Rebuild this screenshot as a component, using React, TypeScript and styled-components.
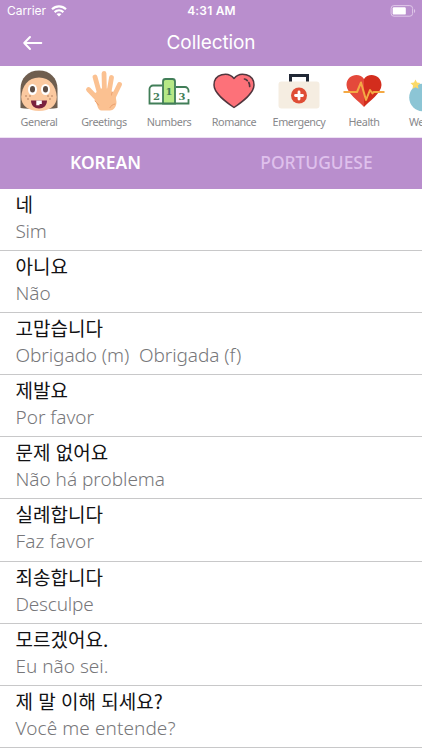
import React from 'react';
import styled, { createGlobalStyle } from 'styled-components';

const PURPLE = '#b98ecd';

const GlobalStyle = createGlobalStyle`
  * { box-sizing: border-box; }
  body { margin: 0; background: #fff; overflow: hidden; }
`;

const Screen = styled.div`
  width: 422px;
  height: 750px;
  overflow: hidden;
  background: #fff;
  display: flex;
  flex-direction: column;
  font-family: 'Noto Sans', 'Noto Sans CJK KR', sans-serif;
`;

const StatusBar = styled.div`
  flex: none;
  height: 22px;
  padding: 0 6px 0 7px;
  display: grid;
  grid-template-columns: 1fr auto 1fr;
  align-items: center;
  background: ${PURPLE};
  color: #fff;
  font-family: Inter, sans-serif;
  font-size: 12px;
  line-height: 22px;
`;

const Carrier = styled.div`
  display: flex;
  align-items: center;
  gap: 5px;
  letter-spacing: -0.05px;
`;

const Clock = styled.div`
  font-weight: 600;
  letter-spacing: 0.2px;
`;

const BatterySlot = styled.div`
  display: flex;
  justify-content: flex-end;
`;

const NavBar = styled.header`
  flex: none;
  height: 44px;
  padding: 0 21px;
  display: grid;
  grid-template-columns: 24px 1fr 24px;
  align-items: center;
  background: ${PURPLE};
`;

const BackButton = styled.button`
  display: flex;
  padding: 0;
  margin-top: -3px;
  border: 0;
  background: none;
`;

const Title = styled.h1`
  margin: 0;
  color: #fff;
  font: 400 19px/40px Inter, sans-serif;
  letter-spacing: -0.1px;
  text-align: center;
  padding-bottom: 3px;
`;

const Categories = styled.nav`
  flex: none;
  height: 72px;
  padding: 4px 0 0 6.5px;
  display: flex;
  overflow: hidden;
  border-bottom: 1px solid #efe2f4;
`;

const Category = styled.div`
  flex: none;
  width: 65px;
  display: flex;
  flex-direction: column;
  align-items: center;
  color: #88888b;
`;

const CategoryLabel = styled.span`
  margin-top: 2px;
  font-size: 10.8px;
  line-height: 16px;
  letter-spacing: -0.42px;
  white-space: nowrap;
`;

const Tabs = styled.div`
  flex: none;
  height: 51px;
  display: grid;
  grid-template-columns: 1fr 1fr;
  background: ${PURPLE};
`;

const Tab = styled.div<{ $active?: boolean }>`
  color: ${(p) => (p.$active ? '#fff' : '#dfc0ec')};
  font-size: 17.4px;
  font-weight: ${(p) => (p.$active ? 600 : 500)};
  line-height: 48px;
  text-align: center;
`;

const PhraseList = styled.ul`
  margin: 0;
  padding: 0;
  list-style: none;
`;

const PhraseRow = styled.li`
  height: 62.1px;
  padding: 1px 15.5px 0;
  border-bottom: 1px solid #c8c8c9;
`;

const Phrase = styled.div`
  color: #121214;
  font: 400 19px/27px 'Noto Sans CJK KR', sans-serif;
  word-spacing: 1px;
`;

const Translation = styled.div<{ $spacing?: number }>`
  margin-top: 1px;
  color: #77777a;
  font-size: 19px;
  font-weight: 300;
  line-height: 26px;
  letter-spacing: ${(p) => p.$spacing ?? 0}px;
  white-space: pre;
`;

const WifiIcon = () => (
  <svg width="16" height="12" viewBox="0 0 16 12" fill="none" stroke="#fff" strokeWidth="2.1">
    <path d="M1 4.3C5 .4 11 .4 15 4.3" />
    <path d="M3.6 7.1c2.6-2.3 6.2-2.3 8.8 0" />
    <path d="M8 11.6 5.5 9.1c1.5-1.3 3.5-1.3 5 0z" fill="#fff" stroke="none" />
  </svg>
);

const BatteryIcon = () => (
  <svg width="26" height="12" viewBox="0 0 26 12">
    <rect x="1.1" y=".6" width="21.5" height="10.6" rx="2.8" fill="none" stroke="#dfc8e8" />
    <rect x="2.7" y="2.2" width="13.1" height="7.4" rx="1.2" fill="#fff" />
    <path d="M24 4v4c1.6-.6 1.6-3.4 0-4z" fill="#dfc8e8" />
  </svg>
);

const BackIcon = () => (
  <svg width="24" height="20" viewBox="0 0 24 20" fill="none" stroke="#fff" strokeWidth="2" strokeLinecap="round" strokeLinejoin="round">
    <path d="M20.3 10H3.2M9 4 3.2 10 9 16" />
  </svg>
);

const GirlIcon = () => (
  <svg width="42" height="42" viewBox="0 0 42 42">
    <path d="M2.5 38V19C2.500 8 10 .5 21 .5S39.500 8 39.500 19v19c-9 1.200-28 1.200-37 0z" fill="#6f5e4f" />
    <path d="M3.200 27C4 16 10 7.500 21 7.500S38 16 38.800 27c0 8.500-7 14-17.800 14S3.200 35.500 3.200 27z" fill="#fbc9a0" />
    <ellipse cx="14.5" cy="19.5" rx="4.5" ry="5.5" fill="#fff" />
    <ellipse cx="27.5" cy="19.5" rx="4.5" ry="5.5" fill="#fff" />
    <ellipse cx="14.5" cy="19.3" rx="2.5" ry="3.2" fill="#5d4d46" />
    <ellipse cx="27.5" cy="19.3" rx="2.5" ry="3.2" fill="#5d4d46" />
    <g fill="#9a674c">
      <circle cx="8" cy="26" r=".7" /><circle cx="12" cy="26" r=".7" /><circle cx="10" cy="29" r=".7" />
      <circle cx="30" cy="26" r=".7" /><circle cx="34" cy="26" r=".7" /><circle cx="32" cy="29" r=".7" />
    </g>
    <path d="M13 30.500h16c0 5-3.500 8-8 8s-8-3-8-8z" fill="#79213e" />
    <path d="M18.300 30.500h5.500v3.500H21.500v1.200h-3.200z" fill="#fff" />
  </svg>
);

const HandIcon = () => (
  <svg width="42" height="42" viewBox="0 0 42 42">
    <g stroke="#fbc191" strokeWidth="4.8" strokeLinecap="round" fill="none">
      <path d="M14.500 29 5.500 19.500" /><path d="M17 25 12 7" /><path d="M21.500 24 21 3.400" /><path d="M25.500 25 28.500 7.500" /><path d="m29 30 7.500-15.500" />
    </g>
    <path d="M11 23c3 0 3.500-2 3.500-4.500h12c1 2 1.500 3.500 5.500 4L33.500 32c0 5-3.500 8.500-6.500 8.500h-8.500c-4 0-3.500-5.500-6.500-10z" fill="#fbc191" />
    <path d="M12 31c1 1.500 2.500 2 3.500 4M27 37.500c.8-1.500 2.500-3 5-3.500M29.500 22c-.8 1-1 2-1 3" fill="none" stroke="#e99d6c" strokeLinecap="round" />
  </svg>
);

const PodiumIcon = () => (
  <svg width="42" height="42" viewBox="0 0 42 42" fill="none" stroke="#417e58" strokeWidth="1.8">
    <path d="M14 15.500H5A3.500 3.500 0 0 0 1.500 19v14.500h39V29M28 17h9a3.500 3.500 0 0 1 3.500 3.500v2" />
    <path d="M15 33.500V11.500A2.500 2.500 0 0 1 17.500 9h7A2.500 2.500 0 0 1 27 11.500v22z" fill="#b6e886" />
    <g fill="#417e58" stroke="none" fontFamily="DejaVu Serif, serif" fontWeight="700" fontSize="10" textAnchor="middle">
      <text x="8.500" y="29.8">2</text><text x="21.1" y="24.5">1</text><text x="34" y="29.8">3</text>
    </g>
  </svg>
);

const HeartIcon = () => (
  <svg width="42" height="42" viewBox="0 0 42 42">
    <path d="M21 37.500C13 32 1 23.500 1 15 1 4 15 1 21 8.500c6-7.500 20-4.500 20 6.500 0 8.500-12 17-20 22.500z" fill="#fd7179" stroke="#51363e" strokeWidth="1.5" strokeLinejoin="round" />
    <path d="M31.500 9c1.200.2 2 .8 2.800 1.600M35.800 12.500c.8 1.500 1 2.500.9 4" fill="none" stroke="#51363e" strokeWidth="1.7" strokeLinecap="round" />
  </svg>
);

const KitIcon = () => (
  <svg width="42" height="42" viewBox="0 0 42 42">
    <path d="M12.500 17V5.500h17V17" fill="none" stroke="#222936" strokeWidth="3" />
    <rect x=".5" y="11.5" width="41" height="27" rx="3" fill="#f5ede1" />
    <circle cx="21" cy="25.5" r="8" fill="#df4d35" />
    <path d="M21 22v7M17.500 25.500h7" stroke="#fff" strokeWidth="2.8" strokeLinecap="round" />
  </svg>
);

const HealthIcon = () => (
  <svg width="42" height="42" viewBox="0 0 42 42">
    <path d="M21 37C16 31.500 3.500 23 3.500 15 3.500 4 17 2 21 9z" fill="#e4493b" />
    <path d="M21 37c5-5.500 17.500-14 17.500-22C38.500 4 25 2 21 9z" fill="#d32d1d" />
    <path d="M.5 22H14l4-9.500 5 17.500 4-10 2.500 3.500 1-1.500h11" fill="none" stroke="#f4a944" strokeWidth="2" strokeLinejoin="round" />
  </svg>
);

const WeatherIcon = () => (
  <svg width="42" height="42" viewBox="0 0 42 42">
    <circle cx="15" cy="27.5" r="13.8" fill="#8cc5d5" />
    <path d="m7.500 9.500 1.500 3 3.400.500-2.500 2.400.6 3.400-3-1.600-3 1.600.5-3.400L2.500 13l3.500-.5z" fill="#fbd968" />
  </svg>
);

const categories: { label: string; Icon: React.FC }[] = [
  { label: 'General', Icon: GirlIcon },
  { label: 'Greetings', Icon: HandIcon },
  { label: 'Numbers', Icon: PodiumIcon },
  { label: 'Romance', Icon: HeartIcon },
  { label: 'Emergency', Icon: KitIcon },
  { label: 'Health', Icon: HealthIcon },
  { label: 'Weather', Icon: WeatherIcon },
];

const phrases: { ko: string; pt: string; spacing?: number }[] = [
  { ko: '네', pt: 'Sim', spacing: -0.3 },
  { ko: '아니요', pt: 'Não' },
  { ko: '고맙습니다', pt: 'Obrigado (m)  Obrigada (f)', spacing: -0.07 },
  { ko: '제발요', pt: 'Por favor' },
  { ko: '문제 없어요', pt: 'Não há problema', spacing: -0.02 },
  { ko: '실례합니다', pt: 'Faz favor', spacing: 0.15 },
  { ko: '죄송합니다', pt: 'Desculpe', spacing: -0.2 },
  { ko: '모르겠어요.', pt: 'Eu não sei.' },
  { ko: '제 말 이해 되세요?', pt: 'Você me entende?', spacing: 0.08 },
];

export default function App() {
  return (
    <Screen>
      <GlobalStyle />
      <StatusBar>
        <Carrier>Carrier <WifiIcon /></Carrier>
        <Clock>4:31 AM</Clock>
        <BatterySlot><BatteryIcon /></BatterySlot>
      </StatusBar>
      <NavBar>
        <BackButton aria-label="Back"><BackIcon /></BackButton>
        <Title>Collection</Title>
      </NavBar>
      <Categories>
        {categories.map(({ label, Icon }) => (
          <Category key={label}>
            <Icon />
            <CategoryLabel>{label}</CategoryLabel>
          </Category>
        ))}
      </Categories>
      <Tabs>
        <Tab $active>KOREAN</Tab>
        <Tab>PORTUGUESE</Tab>
      </Tabs>
      <PhraseList>
        {phrases.map((p) => (
          <PhraseRow key={p.ko}>
            <Phrase>{p.ko}</Phrase>
            <Translation $spacing={p.spacing}>{p.pt}</Translation>
          </PhraseRow>
        ))}
      </PhraseList>
    </Screen>
  );
}
